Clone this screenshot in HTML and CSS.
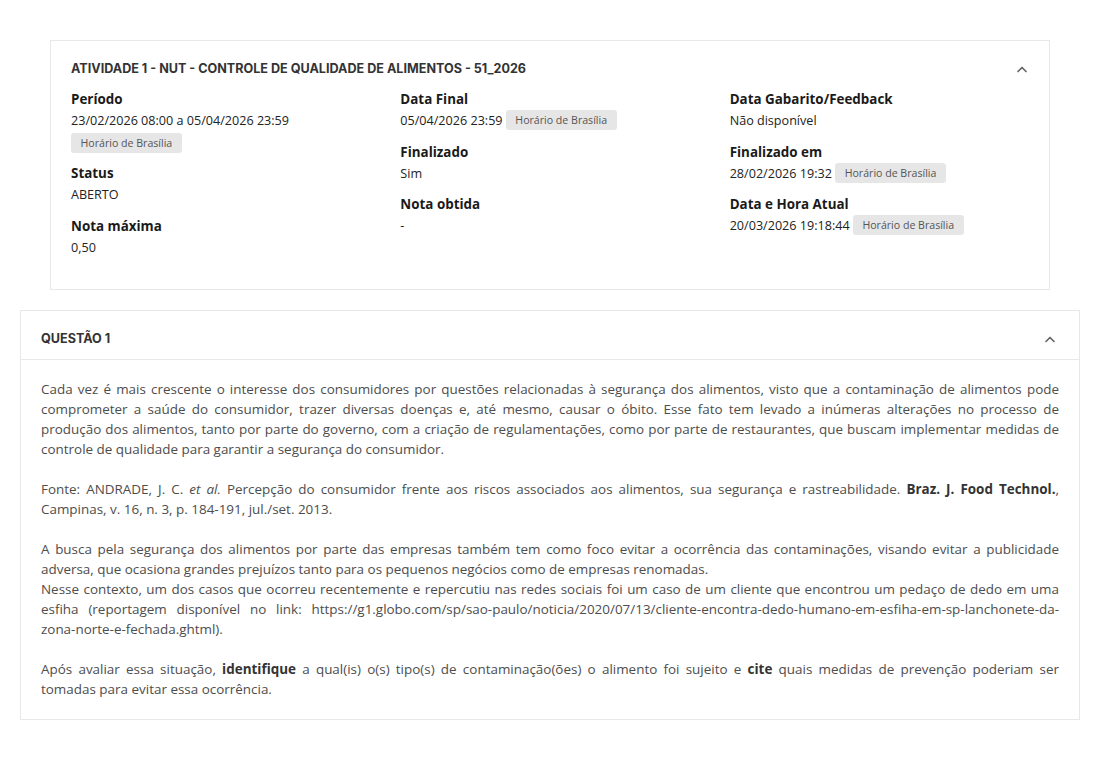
FILE: index.html
```html
<!DOCTYPE html>
<html lang="pt-BR">
<head>
<meta charset="utf-8">
<title>Atividade 1</title>
<link rel="stylesheet" href="styles.css">
</head>
<body>
<main class="page">
  <section class="card info-card">
    <header class="card-title-row">
      <h1 class="card-title">ATIVIDADE 1 - NUT - CONTROLE DE QUALIDADE DE ALIMENTOS - 51_2026</h1>
      <svg class="chevron" viewBox="0 0 12 8" aria-hidden="true"><polyline points="2,6.5 6,2.5 10,6.5"/></svg>
    </header>
    <div class="info-grid">
      <div class="info-col">
        <div class="field">
          <div class="field-label">Período</div>
          <div class="field-value">23/02/2026 08:00 a 05/04/2026 23:59</div>
          <div class="badge-row"><span class="badge">Horário de Brasília</span></div>
        </div>
        <div class="field">
          <div class="field-label">Status</div>
          <div class="field-value">ABERTO</div>
        </div>
        <div class="field">
          <div class="field-label">Nota máxima</div>
          <div class="field-value">0,50</div>
        </div>
      </div>
      <div class="info-col">
        <div class="field">
          <div class="field-label">Data Final</div>
          <div class="field-value">05/04/2026 23:59 <span class="badge">Horário de Brasília</span></div>
        </div>
        <div class="field">
          <div class="field-label">Finalizado</div>
          <div class="field-value">Sim</div>
        </div>
        <div class="field">
          <div class="field-label">Nota obtida</div>
          <div class="field-value">-</div>
        </div>
      </div>
      <div class="info-col">
        <div class="field">
          <div class="field-label">Data Gabarito/Feedback</div>
          <div class="field-value">Não disponível</div>
        </div>
        <div class="field">
          <div class="field-label">Finalizado em</div>
          <div class="field-value">28/02/2026 19:32 <span class="badge">Horário de Brasília</span></div>
        </div>
        <div class="field">
          <div class="field-label">Data e Hora Atual</div>
          <div class="field-value">20/03/2026 19:18:44 <span class="badge">Horário de Brasília</span></div>
        </div>
      </div>
    </div>
  </section>

  <section class="card question-card">
    <header class="question-header">
      <h2 class="question-title">QUESTÃO 1</h2>
      <svg class="chevron" viewBox="0 0 12 8" aria-hidden="true"><polyline points="2,6.5 6,2.5 10,6.5"/></svg>
    </header>
    <div class="question-body">
      <p class="block"><span class="ln">Cada vez é mais crescente o interesse dos consumidores por questões relacionadas à segurança dos alimentos, visto que a contaminação de alimentos pode</span>
        <span class="ln">comprometer a saúde do consumidor, trazer diversas doenças e, até mesmo, causar o óbito. Esse fato tem levado a inúmeras alterações no processo de</span>
        <span class="ln">produção dos alimentos, tanto por parte do governo, com a criação de regulamentações, como por parte de restaurantes, que buscam implementar medidas de</span>
        <span class="ln-last">controle de qualidade para garantir a segurança do consumidor.</span></p>
      <p class="block"><span class="ln">Fonte: ANDRADE, J. C. <em>et al.</em> Percepção do consumidor frente aos riscos associados aos alimentos, sua segurança e rastreabilidade. <strong>Braz. J. Food Technol.</strong>,</span>
        <span class="ln-last">Campinas, v. 16, n. 3, p. 184-191, jul./set. 2013.</span></p>
      <p class="line"><span class="ln">A busca pela segurança dos alimentos por parte das empresas também tem como foco evitar a ocorrência das contaminações, visando evitar a publicidade</span>
        <span class="ln-last">adversa, que ocasiona grandes prejuízos tanto para os pequenos negócios como de empresas renomadas.</span></p>
      <p class="block"><span class="ln">Nesse contexto, um dos casos que ocorreu recentemente e repercutiu nas redes sociais foi um caso de um cliente que encontrou um pedaço de dedo em uma</span>
        <span class="ln">esfiha (reportagem disponível no link: https://g1.globo.com/sp/sao-paulo/noticia/2020/07/13/cliente-encontra-dedo-humano-em-esfiha-em-sp-lanchonete-da-</span>
        <span class="ln-last">zona-norte-e-fechada.ghtml).</span></p>
      <p class="line"><span class="ln">Após avaliar essa situação, <strong>identifique</strong> a qual(is) o(s) tipo(s) de contaminação(ões) o alimento foi sujeito e <strong>cite</strong> quais medidas de prevenção poderiam ser</span>
        <span class="ln-last">tomadas para evitar essa ocorrência.</span></p>
    </div>
  </section>
</main>
</body>
</html>
```
FILE: styles.css
```css
* { box-sizing: border-box; }

body {
  margin: 0;
  background: #ffffff;
  font-family: "Open Sans", "Noto Sans", sans-serif;
  color: #222222;
}

.page {
  padding: 40px 20px 40px;
  display: flex;
  flex-direction: column;
  gap: 20px;
}

.card {
  background: #ffffff;
  border: 1px solid #e8e8e8;
}

.info-card {
  margin: 0 30px;
  padding: 20px 20px 21px;
}

.card-title-row,
.question-header {
  display: flex;
  align-items: center;
  justify-content: space-between;
}

.card-title,
.question-title {
  margin: 0;
  font-family: "Inter", "Open Sans", sans-serif;
  font-weight: 700;
  font-size: 12.6px;
  line-height: 16px;
  color: #333333;
}

.chevron {
  width: 12px;
  height: 8px;
  margin-right: 1px;
  fill: none;
  stroke: #666666;
  stroke-width: 1.7;
  stroke-linecap: round;
  stroke-linejoin: round;
}

.info-grid {
  margin-top: 12px;
  display: grid;
  grid-template-columns: repeat(3, 1fr);
  column-gap: 30px;
}

.field {
  margin-bottom: 10.5px;
}

.field-label {
  font-weight: 700;
  font-size: 13.4px;
  line-height: 21px;
  color: #1a1a1a;
}

.field-value {
  font-size: 12.6px;
  line-height: 21px;
  height: 21px;
  color: #222222;
}

.badge-row {
  margin-top: 1.5px;
  height: 20px;
  line-height: 20px;
}

.badge {
  display: inline-block;
  height: 20px;
  padding: 0 9.5px;
  border-radius: 3px;
  background: #e6e6e6;
  color: #555555;
  font-size: 10.6px;
  line-height: 20px;
  vertical-align: top;
}

.question-header {
  padding: 20px 20px 12px;
  border-bottom: 1px solid #e8e8e8;
}

.question-header .chevron { margin-right: 3px; }

.question-body {
  padding: 19px 20px 20px;
  font-size: 13.45px;
  line-height: 20px;
  color: #4d4d4d;
  text-align: justify;
}

.question-body p {
  margin: 0;
}

.question-body p.block {
  margin-bottom: 20px;
}

.question-body .ln {
  display: block;
  text-align: justify;
  text-align-last: justify;
}

.question-body .ln-last {
  display: block;
  text-align: left;
}

.question-body strong {
  font-weight: 700;
  color: #333333;
}
```
